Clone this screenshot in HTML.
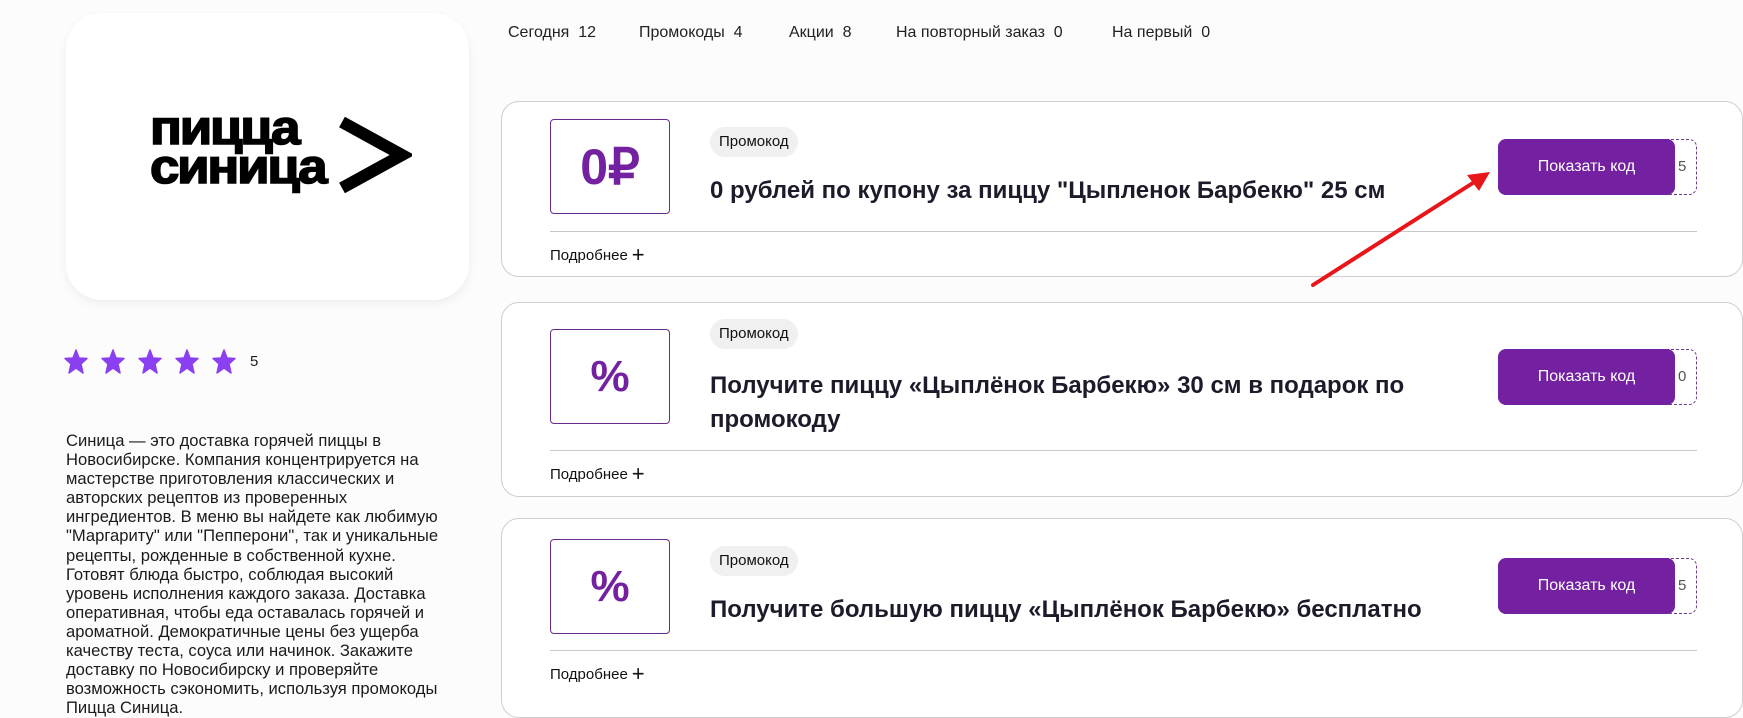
<!DOCTYPE html>
<html><head><meta charset="utf-8"><style>
*{box-sizing:border-box;margin:0;padding:0}
body{width:1743px;height:701px;overflow:hidden;background:#fcfcfc;font-family:"Liberation Sans",sans-serif;color:#1b1b2a;position:relative}
.a{position:absolute}
.tab{top:24px;font-size:16px;color:#222;white-space:nowrap}
.logo{left:66px;top:13px;width:403px;height:287px;background:#fff;border-radius:36px;box-shadow:0 4px 10px rgba(0,0,0,.06)}
.card{left:501px;width:1242px;background:#fff;border:1px solid #cfcfcf;border-radius:18px}
.ic{left:48px;width:120px;border:1px solid #6b2a8f;border-radius:4px;color:#7321a0;font-weight:bold;font-size:50px;display:flex;align-items:center;justify-content:center}
.pc{font-size:44px}
.badge{left:208px;height:30px;padding:0 9px;background:#f0f0f0;border-radius:15px;font-size:15px;line-height:30px;color:#111}
.title{left:208px;font-size:24px;font-weight:bold;line-height:34px;color:#1b1b2a;width:740px}
.div{left:48px;width:1147px;height:1px;background:#c8c8c8}
.more{left:48px;font-size:15px;color:#111}
.more b{font-weight:normal;font-size:22px;vertical-align:-2px;margin-left:4px}
.btnw{left:996px;width:199px;height:56px;border:1px dashed #6b3a8f;border-radius:8px}
.btn{left:996px;width:177px;height:56px;background:#7321a0;border-radius:8px;color:#fff;font-size:16px;line-height:56px;text-align:center}
.cnt{left:1176px;font-size:15px;color:#555;line-height:56px}
</style></head><body>
<div class="a tab" style="left:508px">Сегодня&nbsp; 12</div>
<div class="a tab" style="left:639px">Промокоды&nbsp; 4</div>
<div class="a tab" style="left:789px">Акции&nbsp; 8</div>
<div class="a tab" style="left:896px">На повторный заказ&nbsp; 0</div>
<div class="a tab" style="left:1112px">На первый&nbsp; 0</div>

<div class="a logo"></div>
<div class="a" style="left:150px;top:109px;font-size:48px;font-weight:900;line-height:39px;letter-spacing:-2px;color:#000;transform:scaleX(1.1);transform-origin:left top;-webkit-text-stroke:1.6px #000">пицца<br>синица</div>
<svg class="a" style="left:338px;top:116px" width="74" height="78" viewBox="0 0 74 78"><path d="M4 6 L64 39 L4 72" fill="none" stroke="#000" stroke-width="12"/></svg>

<svg class="a" style="left:64px;top:349px" width="190" height="26" viewBox="0 0 190 26">
<g fill="#8a3ff0">
<path id="s" d="M12 1 L15 9 L23 9.5 L17 15 L19 24 L12 19 L5 24 L7 15 L1 9.5 L9 9 Z" stroke="#8a3ff0" stroke-width="1.5" stroke-linejoin="round"/>
<use href="#s" x="37"/><use href="#s" x="74"/><use href="#s" x="111"/><use href="#s" x="148"/>
</g></svg>
<div class="a" style="left:250px;top:353px;font-size:15px">5</div>

<div class="a" style="left:66px;top:431px;width:386px;font-size:16.6px;line-height:19.1px;color:#1b1b1b">Синица — это доставка горячей пиццы в Новосибирске. Компания концентрируется на мастерстве приготовления классических и авторских рецептов из проверенных ингредиентов. В меню вы найдете как любимую "Маргариту" или "Пепперони", так и уникальные рецепты, рожденные в собственной кухне. Готовят блюда быстро, соблюдая высокий уровень исполнения каждого заказа. Доставка оперативная, чтобы еда оставалась горячей и ароматной. Демократичные цены без ущерба качеству теста, соуса или начинок. Закажите доставку по Новосибирску и проверяйте возможность сэкономить, используя промокоды Пицца Синица.</div>

<div class="a card" style="top:101px;height:176px">
<div class="a ic" style="top:17px;height:95px">0₽</div>
<div class="a badge" style="top:25px">Промокод</div>
<div class="a title" style="top:72px">0 рублей по купону за пиццу "Цыпленок Барбекю" 25 см</div>
<div class="a btnw" style="top:37px"></div><div class="a btn" style="top:37px">Показать код</div><div class="a cnt" style="top:37px">5</div>
<div class="a div" style="top:129px"></div>
<div class="a more" style="top:140px">Подробнее<b>+</b></div>
</div>

<div class="a card" style="top:302px;height:195px">
<div class="a ic pc" style="top:26px;height:95px">%</div>
<div class="a badge" style="top:16px">Промокод</div>
<div class="a title" style="top:66px">Получите пиццу «Цыплёнок Барбекю» 30 см в подарок по промокоду</div>
<div class="a btnw" style="top:46px"></div><div class="a btn" style="top:46px">Показать код</div><div class="a cnt" style="top:46px">0</div>
<div class="a div" style="top:147px"></div>
<div class="a more" style="top:158px">Подробнее<b>+</b></div>
</div>

<div class="a card" style="top:518px;height:200px">
<div class="a ic pc" style="top:20px;height:95px">%</div>
<div class="a badge" style="top:27px">Промокод</div>
<div class="a title" style="top:74px">Получите большую пиццу «Цыплёнок Барбекю» бесплатно</div>
<div class="a btnw" style="top:39px"></div><div class="a btn" style="top:39px">Показать код</div><div class="a cnt" style="top:39px">5</div>
<div class="a div" style="top:131px"></div>
<div class="a more" style="top:142px">Подробнее<b>+</b></div>
</div>

<svg class="a" style="left:0;top:0" width="1743" height="701"><line x1="1313" y1="285" x2="1476" y2="181" stroke="#e8161b" stroke-width="4" stroke-linecap="round"/><path d="M1490 172 L1467 175 L1479 191 Z" fill="#e8161b"/></svg>
</body></html>
